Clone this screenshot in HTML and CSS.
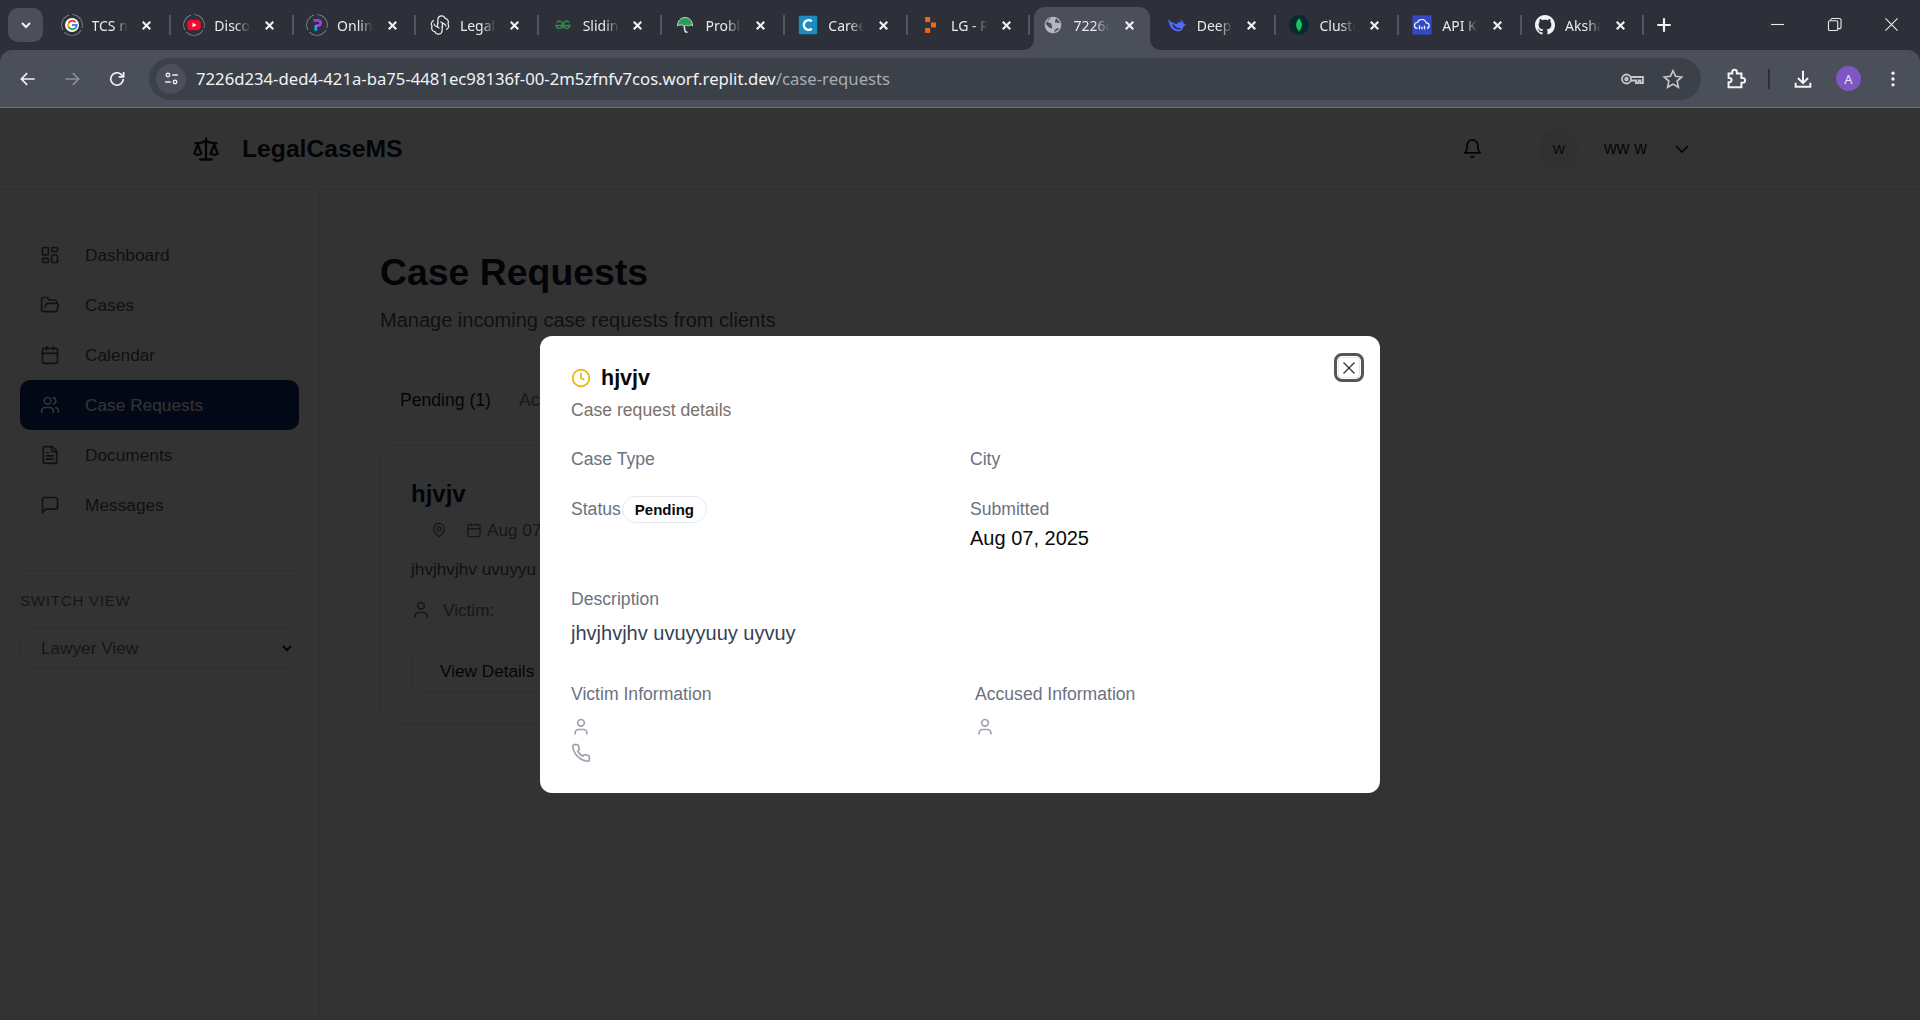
FILE: index.html
```html
<!DOCTYPE html>
<html lang="en">
<head>
<meta charset="UTF-8" />
<meta name="viewport" content="width=device-width, initial-scale=1" />
<title>LegalCaseMS - Case Requests</title>
<link rel="stylesheet" href="styles.css">
</head>
<body>
  <svg class="sprite" width="0" height="0">
    <symbol id="i-x" viewBox="0 0 24 24"><path d="M18 6 6 18"/><path d="m6 6 12 12"/></symbol>
    <symbol id="i-user" viewBox="0 0 24 24"><path d="M19 21v-2a4 4 0 0 0-4-4H9a4 4 0 0 0-4 4v2"/><circle cx="12" cy="7" r="4"/></symbol>
    <symbol id="i-calendar" viewBox="0 0 24 24"><path d="M8 2v4"/><path d="M16 2v4"/><rect width="18" height="18" x="3" y="4" rx="2"/><path d="M3 10h18"/></symbol>
    <symbol id="i-chevron" viewBox="0 0 24 24"><path d="m6 9 6 6 6-6"/></symbol>
  </svg>

  <!-- browser tab strip -->
  <div class="tabstrip">
    <button class="tabsearch"><svg class="icon"><use href="#i-chevron"/></svg></button>
    <div class="tabs">
      <div class="tab">
        <span class="favicon ring"><svg viewBox="0 0 24 24"><circle cx="12" cy="12" r="12" fill="#fff"/><path d="M18.300 7.200a7.800 7.800 0 0 0-12.200 1.300" fill="none" stroke="#ea4335" stroke-width="3.400"/><path d="M6.100 8.500a7.800 7.800 0 0 0 0 7" fill="none" stroke="#fbbc05" stroke-width="3.400"/><path d="M6.100 15.500a7.800 7.800 0 0 0 12 1.800" fill="none" stroke="#34a853" stroke-width="3.400"/><path d="M18.100 17.300a7.800 7.800 0 0 0 1.900-5.300h-8" fill="none" stroke="#4285f4" stroke-width="3.400"/></svg></span>
        <span class="tab-title">TCS ninja</span><svg class="tab-close"><use href="#i-x"/></svg>
      </div>
      <div class="tab">
        <span class="favicon ring"><svg viewBox="0 0 24 24"><rect x="0.500" y="3" width="23" height="18" rx="6" fill="#f50b32"/><path d="M9.500 8v8l7-4z" fill="#fff"/></svg></span>
        <span class="tab-title">Discover</span><svg class="tab-close"><use href="#i-x"/></svg>
      </div>
      <div class="tab">
        <span class="favicon ring"><svg viewBox="0 0 24 24"><path d="M6 4h7c7 0 7 9 0 9H10.500" fill="none" stroke="#a23ce8" stroke-width="4.500"/><path d="M10 12v10" stroke="#1fa5e8" stroke-width="4.500"/></svg></span>
        <span class="tab-title">Online</span><svg class="tab-close"><use href="#i-x"/></svg>
      </div>
      <div class="tab">
        <span class="favicon"><svg viewBox="0 0 24 24" fill="none" stroke="#e8eaed" stroke-width="1.500"><path d="M9.500 11V5.500a4.500 4.500 0 0 1 8.700-1.500 4.500 4.500 0 0 1 3.300 6.500 4.500 4.500 0 0 1-2.300 7M12.500 8l4.800 2.800a4.500 4.500 0 0 1 2 3M15 10l-.2 5.500M14.500 13v5.500a4.500 4.500 0 0 1-8.700 1.500 4.500 4.500 0 0 1-3.300-6.500 4.500 4.500 0 0 1 2.300-7M11.500 16l-4.800-2.800a4.500 4.500 0 0 1-2-3M9 14l.2-5.500"/></svg></span>
        <span class="tab-title">Legal</span><svg class="tab-close"><use href="#i-x"/></svg>
      </div>
      <div class="tab">
        <span class="favicon"><svg viewBox="0 0 24 24" fill="none" stroke="#2f8d46" stroke-width="1.700"><path d="M12 12.500H3.500a4.200 4.200 0 1 0 1-3.500"/><path d="M12 12.500h8.500a4.200 4.200 0 1 1-1-3.500"/></svg></span>
        <span class="tab-title">Sliding</span><svg class="tab-close"><use href="#i-x"/></svg>
      </div>
      <div class="tab">
        <span class="favicon"><svg viewBox="0 0 24 24"><path d="M3 13C3 7 7 3 12 3s9 4 9 10c-2-1.500-3.500-1.500-5 .5-1.500-1.500-3-1.500-4.500 0C10 12 6 11 3 13z" fill="#2e9b57" stroke="#d9efe0"/><path d="M11 13l1 6c.2 1.500 2 2 3 1" fill="none" stroke="#d9efe0" stroke-width="1.800"/></svg></span>
        <span class="tab-title">Problems</span><svg class="tab-close"><use href="#i-x"/></svg>
      </div>
      <div class="tab">
        <span class="favicon"><svg viewBox="0 0 24 24"><rect x="1" y="1" width="22" height="22" rx="1.500" fill="#1c8bc0"/><path d="M16.500 7.500a5.800 5.800 0 1 0 0 9" fill="none" stroke="#fff" stroke-width="3"/></svg></span>
        <span class="tab-title">Careers</span><svg class="tab-close"><use href="#i-x"/></svg>
      </div>
      <div class="tab">
        <span class="favicon"><svg viewBox="0 0 24 24" fill="#f0661a"><rect x="5" y="2.500" width="6" height="6"/><rect x="12" y="9" width="6" height="6"/><rect x="5" y="15.500" width="6" height="6"/></svg></span>
        <span class="tab-title">LG - Research</span><svg class="tab-close"><use href="#i-x"/></svg>
      </div>
      <div class="tab active">
        <span class="favicon"><svg viewBox="0 0 24 24"><circle cx="12" cy="12" r="10" fill="#b4b7bd"/><path d="M11 2.500C9 3.500 6 5 5.500 7S8 9.500 9.500 10c1 1 .5 2.500 1.500 3l-.5 3.500C8.500 16 4.500 13.500 3 10M16 4c-1 1.500-2 3-1.500 5 1.500.5 4 .5 6.500.5M13 21c.5-2 2-4 3.500-5l3.500.5" fill="#4a4f5a"/></svg></span>
        <span class="tab-title">7226d234-ded4</span><svg class="tab-close"><use href="#i-x"/></svg>
      </div>
      <div class="tab">
        <span class="favicon"><svg viewBox="0 0 24 24"><path d="M1.500 5c.5 6 3.500 13 10 14.500 4.500 1 7.500-2 8.500-6 1 0 2.500-1 3-3-1 .8-2 .8-2.800.4-.2-2.200-1.500-4.400-4.200-5.400 1 1 1.500 2.500 1.200 3.800L14.500 8c-1.500.5-2 1.500-2.500 3C8.500 10 4.500 8.500 1.500 5z" fill="#4d6bfe"/><path d="M6 10.500c1 3.500 3 6 6.500 6.800 2 .4 3.500-.4 4.500-1.800-3 .5-5.500 0-7-2-.8-1-2.500-2.200-4-3z" fill="#2d3039"/></svg></span>
        <span class="tab-title">DeepSeek</span><svg class="tab-close"><use href="#i-x"/></svg>
      </div>
      <div class="tab">
        <span class="favicon"><svg viewBox="0 0 24 24"><circle cx="12" cy="12" r="12" fill="#0b2a2f"/><path d="M12 4c2.500 3 3.500 5.500 3.500 8s-1.500 5-3.500 8c-2-3-3.500-5.500-3.500-8s1-5 3.500-8z" fill="#13c85c"/></svg></span>
        <span class="tab-title">Cluster0</span><svg class="tab-close"><use href="#i-x"/></svg>
      </div>
      <div class="tab">
        <span class="favicon"><svg viewBox="0 0 24 24"><rect x="0.500" y="0.500" width="23" height="23" fill="#3448c5"/><path d="M6.500 16a3.500 3.500 0 0 1 0-7 5.500 5.500 0 0 1 10.500.5 3.300 3.300 0 0 1 1 6.500" fill="none" stroke="#fff" stroke-width="1.400"/><path d="M9 12.500V17M12 14v3M15 13v4" stroke="#fff" stroke-width="1.600"/></svg></span>
        <span class="tab-title">API Keys</span><svg class="tab-close"><use href="#i-x"/></svg>
      </div>
      <div class="tab">
        <span class="favicon"><svg viewBox="0 0 16 16"><path fill="#f1f3f4" d="M8 0C3.580 0 0 3.580 0 8c0 3.540 2.290 6.530 5.470 7.590.4.070.55-.17.55-.38 0-.19-.01-.82-.01-1.490-2.010.37-2.530-.49-2.690-.94-.09-.23-.48-.94-.82-1.130-.28-.15-.68-.52-.01-.53.630-.01 1.080.58 1.230.82.720 1.210 1.870.87 2.330.66.070-.52.280-.87.510-1.070-1.780-.2-3.640-.89-3.640-3.950 0-.87.310-1.590.820-2.150-.08-.2-.36-1.020.08-2.120 0 0 .67-.21 2.200.82.640-.18 1.320-.27 2-.27s1.360.09 2 .27c1.530-1.040 2.200-.82 2.200-.82.440 1.100.160 1.920.080 2.120.51.560.82 1.270.82 2.150 0 3.070-1.870 3.750-3.650 3.950.29.250.54.730.54 1.480 0 1.070-.01 1.930-.01 2.200 0 .21.150.46.550.38A8.010 8.010 0 0 0 16 8c0-4.420-3.580-8-8-8z"/></svg></span>
        <span class="tab-title">Akshat</span><svg class="tab-close"><use href="#i-x"/></svg>
      </div>
      <button class="newtab"><svg viewBox="0 0 24 24"><path d="M12 4v16M4 12h16"/></svg></button>
    </div>
    <div class="winctrl">
      <svg viewBox="0 0 14 14"><path d="M0 7h14"/></svg>
      <svg viewBox="0 0 14 14"><rect x="0.500" y="3" width="10" height="10.500" rx="1.500"/><path d="M3 3V2a1.500 1.500 0 0 1 1.500-1.500h8A1.500 1.500 0 0 1 14 2v8a1.500 1.500 0 0 1-1.500 1.500h-2"/></svg>
      <svg viewBox="0 0 14 14"><path d="M0.500 0.500l13 13M13.500 0.500l-13 13"/></svg>
    </div>
  </div>

  <!-- browser toolbar -->
  <div class="toolbar">
    <svg class="tool" viewBox="0 0 24 24"><path d="M20 12H5M11 5l-7 7 7 7"/></svg>
    <svg class="tool off" viewBox="0 0 24 24"><path d="M4 12h15M13 5l7 7-7 7"/></svg>
    <svg class="tool" viewBox="0 0 24 24"><path d="M19.500 12a7.500 7.500 0 1 1-2.200-5.300L19.500 9"/><path d="M20 3.500V9.500h-6" /></svg>
    <div class="omnibox">
      <span class="site-btn"><svg viewBox="0 0 24 24"><circle cx="7" cy="7" r="2.500"/><path d="M13 7h8M3 17h8"/><circle cx="17" cy="17" r="2.500"/></svg></span>
      <span class="url">7226d234-ded4-421a-ba75-4481ec98136f-00-2m5zfnfv7cos.worf.replit.dev<span class="url-path">/case-requests</span></span>
      <svg class="omni-icon key" viewBox="0 0 24 24"><circle cx="6.500" cy="12" r="4.500"/><circle cx="6.500" cy="12" r="1.300"/><path d="M11 10h12v6h-2.500v-2.500h-2V16H16v-2.500h-5"/></svg>
      <svg class="omni-icon" viewBox="0 0 24 24"><path d="M12 3l2.800 6 6.700.8-5 4.500 1.400 6.700L12 17.600 6.100 21l1.400-6.700-5-4.500 6.700-.8z"/></svg>
    </div>
    <svg class="tool puzzle" viewBox="0 0 24 24"><path d="M9 4.500a2.500 2.500 0 0 1 5 0V6h5v5h1.500a2.500 2.500 0 0 1 0 5H19v5H5v-5.500h1a2.300 2.300 0 0 0 0-4.600H5V6h4z"/></svg>
    <span class="tool-sep"></span>
    <svg class="tool dl" viewBox="0 0 24 24"><path d="M12 3v13M6.500 11l5.500 5.500 5.500-5.500M4 16v4.500h16V16"/></svg>
    <span class="profile">A</span>
    <svg class="tool dots" viewBox="0 0 24 24"><circle cx="12" cy="5" r="2"/><circle cx="12" cy="12" r="2"/><circle cx="12" cy="19" r="2"/></svg>
  </div>

  <!-- the app itself -->
  <div class="page">
    <header class="appbar">
      <div class="appbar-inner">
        <div class="brand">
          <svg class="brand-icon" viewBox="0 0 24 24"><path d="m16 16 3-8 3 8c-.87.65-1.920 1-3 1s-2.130-.35-3-1Z"/><path d="m2 16 3-8 3 8c-.87.65-1.920 1-3 1s-2.130-.35-3-1Z"/><path d="M7 21h10"/><path d="M12 3v18"/><path d="M3 7h2c2 0 5-1 7-2 2 1 5 2 7 2h2"/></svg>
          <span class="brand-name">LegalCaseMS</span>
        </div>
        <div class="account">
          <svg class="bell" viewBox="0 0 24 24"><path d="M6 8a6 6 0 0 1 12 0c0 7 3 9 3 9H3s3-2 3-9"/><path d="M10.300 21a1.940 1.940 0 0 0 3.400 0"/></svg>
          <span class="avatar">w</span>
          <span class="account-name">ww w</span>
          <svg class="account-chev"><use href="#i-chevron"/></svg>
        </div>
      </div>
    </header>

    <div class="layout">
      <aside class="sidebar">
        <nav class="nav">
          <a class="nav-item"><svg viewBox="0 0 24 24"><rect width="7" height="9" x="3" y="3" rx="1"/><rect width="7" height="5" x="14" y="3" rx="1"/><rect width="7" height="9" x="14" y="12" rx="1"/><rect width="7" height="5" x="3" y="16" rx="1"/></svg>Dashboard</a>
          <a class="nav-item"><svg viewBox="0 0 24 24"><path d="m6 14 1.500-2.900A2 2 0 0 1 9.240 10H20a2 2 0 0 1 1.940 2.500l-1.540 6a2 2 0 0 1-1.950 1.500H4a2 2 0 0 1-2-2V5a2 2 0 0 1 2-2h3.900a2 2 0 0 1 1.690.9l.81 1.200a2 2 0 0 0 1.670.9H18a2 2 0 0 1 2 2v2"/></svg>Cases</a>
          <a class="nav-item"><svg><use href="#i-calendar"/></svg>Calendar</a>
          <a class="nav-item active"><svg viewBox="0 0 24 24"><path d="M16 21v-2a4 4 0 0 0-4-4H6a4 4 0 0 0-4 4v2"/><circle cx="9" cy="7" r="4"/><path d="M22 21v-2a4 4 0 0 0-3-3.870"/><path d="M16 3.130a4 4 0 0 1 0 7.750"/></svg>Case Requests</a>
          <a class="nav-item"><svg viewBox="0 0 24 24"><path d="M15 2H6a2 2 0 0 0-2 2v16a2 2 0 0 0 2 2h12a2 2 0 0 0 2-2V7Z"/><path d="M14 2v4a2 2 0 0 0 2 2h4"/><path d="M10 9H8"/><path d="M16 13H8"/><path d="M16 17H8"/></svg>Documents</a>
          <a class="nav-item"><svg viewBox="0 0 24 24"><path d="M21 15a2 2 0 0 1-2 2H7l-4 4V5a2 2 0 0 1 2-2h14a2 2 0 0 1 2 2z"/></svg>Messages</a>
        </nav>
        <div class="switch">
          <div class="switch-label">SWITCH VIEW</div>
          <div class="switch-field">
            <select class="switch-select"><option>Lawyer View</option></select>
            <svg class="switch-chev"><use href="#i-chevron"/></svg>
          </div>
        </div>
      </aside>

      <main class="main">
        <h1>Case Requests</h1>
        <p class="lead">Manage incoming case requests from clients</p>
        <div class="req-tabs">
          <span class="req-tab current">Pending (1)</span>
          <span class="req-tab">Accepted</span>
        </div>
        <div class="req-card">
          <h3>hjvjv</h3>
          <div class="req-meta">
            <svg viewBox="0 0 24 24"><path d="M20 10c0 6-8 12-8 12s-8-6-8-12a8 8 0 0 1 16 0Z"/><circle cx="12" cy="10" r="3"/></svg>
            <svg class="req-cal"><use href="#i-calendar"/></svg>
            <span>Aug 07</span>
          </div>
          <p class="req-desc">jhvjhvjhv uvuyyu</p>
          <div class="req-victim"><svg><use href="#i-user"/></svg>Victim:</div>
          <button class="req-btn">View Details</button>
        </div>
      </main>
    </div>

    <div class="overlay">
      <div class="modal">
        <button class="modal-close"><svg><use href="#i-x"/></svg></button>
        <div class="modal-title">
          <svg viewBox="0 0 24 24"><circle cx="12" cy="12" r="10"/><polyline points="12 6 12 12 16 14"/></svg>
          <span>hjvjv</span>
        </div>
        <p class="modal-sub">Case request details</p>

        <div class="detail-grid">
          <div class="detail"><span class="lbl">Case Type</span></div>
          <div class="detail"><span class="lbl">City</span></div>
          <div class="detail status"><span class="lbl">Status</span><span class="badge">Pending</span></div>
          <div class="detail"><span class="lbl">Submitted</span><div class="val">Aug 07, 2025</div></div>
        </div>

        <div class="description">
          <span class="lbl">Description</span>
          <p>jhvjhvjhv uvuyyuuy uyvuy</p>
        </div>

        <div class="people">
          <div class="person">
            <span class="lbl">Victim Information</span>
            <svg><use href="#i-user"/></svg>
            <svg viewBox="0 0 24 24"><path d="M22 16.920v3a2 2 0 0 1-2.180 2 19.790 19.790 0 0 1-8.630-3.070 19.500 19.500 0 0 1-6-6 19.790 19.790 0 0 1-3.070-8.670A2 2 0 0 1 4.110 2h3a2 2 0 0 1 2 1.720 12.840 12.840 0 0 0 .7 2.810 2 2 0 0 1-.45 2.110L8.090 9.910a16 16 0 0 0 6 6l1.270-1.270a2 2 0 0 1 2.110-.45 12.840 12.840 0 0 0 2.810.7A2 2 0 0 1 22 16.92z"/></svg>
          </div>
          <div class="person">
            <span class="lbl">Accused Information</span>
            <svg><use href="#i-user"/></svg>
          </div>
        </div>
      </div>
    </div>
  </div>
</body>
</html>
```

FILE: styles.css
```css
* {
  box-sizing: border-box;
}
html, body {
  height: 100%;
}
body {
  margin: 0;
  overflow: hidden;
  background: #2d3039;
  font-family: "Liberation Sans", Arial, sans-serif;
  display: flex;
  flex-direction: column;
}
.sprite {
  position: absolute;
}
button {
  border: 0;
  background: none;
  padding: 0;
  font: inherit;
}
svg {
  display: block;
  flex: none;
}

/* browser chrome */
.tabstrip {
  height: 50px;
  flex: none;
  background: #2d3039;
  display: flex;
  align-items: stretch;
  font-family: "Noto Sans", sans-serif;
}
.tabsearch {
  width: 35px;
  height: 34px;
  margin: 8px 0 0 8px;
  border-radius: 10px;
  background: #4a4f5a;
  display: flex;
  align-items: center;
  justify-content: center;
}
.tabsearch .icon {
  width: 16px;
  height: 16px;
  fill: none;
  stroke: #f1f3f4;
  stroke-width: 3;
}
.tabs {
  display: flex;
  margin-left: 5px;
  flex: 1;
}
.tab {
  width: 122.8px;
  display: flex;
  align-items: center;
  position: relative;
  padding-left: 13.5px;
  color: #e8eaed;
  font-size: 14px;
}
.tab::after {
  content: "";
  position: absolute;
  right: 0;
  top: 15px;
  height: 20px;
  width: 2px;
  background: #52565f;
}
.tab.active {
  background: #4a4f5a;
  margin: 7px 2.8px 0 4px;
  width: 116px;
  padding: 0 0 7px 9px;
  border-radius: 11px 11px 0 0;
}
/* the little flares where the active tab meets the toolbar */
.tab.active::before,
.tab.active::after {
  content: "";
  display: block;
  position: absolute;
  top: auto;
  bottom: 0;
  width: 10px;
  height: 10px;
  background: radial-gradient(circle at 0 0, #2d3039 9.5px, #4a4f5a 10px);
}
.tab.active::before {
  left: -10px;
}
.tab.active::after {
  right: -10px;
  background: radial-gradient(circle at 100% 0, #2d3039 9.5px, #4a4f5a 10px);
}
.favicon {
  width: 20px;
  height: 20px;
  flex: none;
  position: relative;
}
.favicon svg {
  width: 20px;
  height: 20px;
}
.favicon.ring svg {
  width: 14px;
  height: 14px;
  margin: 3px;
}
.favicon.ring::before {
  content: "";
  position: absolute;
  inset: -1px;
  border-radius: 50%;
  background: conic-gradient(#70747c 0 105deg, transparent 0 120deg, #70747c 0 225deg, transparent 0 240deg, #70747c 0 345deg, transparent 0);
  -webkit-mask-image: radial-gradient(circle, transparent 9.5px, #000 10px);
  mask-image: radial-gradient(circle, transparent 9.5px, #000 10px);
}
.tab-title {
  margin-left: 10px;
  width: 36px;
  white-space: nowrap;
  overflow: hidden;
  -webkit-mask-image: linear-gradient(to right, #000 60%, transparent);
  mask-image: linear-gradient(to right, #000 60%, transparent);
}
.tab-close {
  width: 15px;
  height: 15px;
  margin-left: 11.5px;
  fill: none;
  stroke: #f1f3f4;
  stroke-width: 3.4;
}
.tab.active .tab-close {
  margin-left: 13px;
}
.newtab {
  width: 20px;
  height: 20px;
  margin: 15px 0 0 10px;
}
.newtab svg {
  fill: none;
  stroke: #f1f3f4;
  stroke-width: 2.6;
  width: 20px;
  height: 20px;
}
.winctrl {
  padding: 0 22px 2px 0;
  display: flex;
  align-items: center;
  gap: 44px;
}
.winctrl svg {
  width: 13px;
  height: 13px;
  fill: none;
  stroke: #e8eaed;
  stroke-width: 1.2;
  overflow: visible;
}

.toolbar {
  height: 58px;
  flex: none;
  background: #4a4f5a;
  border-bottom: 1px solid #6d7078;
  border-radius: 12px 12px 0 0;
  display: flex;
  align-items: center;
  padding: 0 16px 0 18px;
}
.tool {
  width: 20px;
  height: 20px;
  fill: none;
  stroke: #f1f3f4;
  stroke-width: 2;
  margin-right: 24px;
}
.tool.off {
  stroke: #8a8e96;
  margin-right: 25px;
}
.tool.off + .tool {
  margin-right: 23px;
}
.omnibox {
  width: 1552px;
  height: 42px;
  border-radius: 21px;
  background: #3c4049;
  display: flex;
  align-items: center;
  padding: 0 17px 0 7px;
  margin-right: 23px;
  margin-left: -1px;
}
.site-btn {
  width: 30px;
  height: 30px;
  border-radius: 50%;
  background: #4a4f5a;
  display: flex;
  align-items: center;
  justify-content: center;
}
.site-btn svg {
  width: 17px;
  height: 17px;
  fill: none;
  stroke: #e8eaed;
  stroke-width: 2;
}
.url {
  margin-left: 10px;
  font-family: "Noto Sans", sans-serif;
  font-size: 16.7px;
  color: #f1f3f4;
  flex: 1;
  white-space: nowrap;
}
.url-path {
  color: #a9acb2;
}
.omni-icon {
  width: 22px;
  height: 22px;
  fill: none;
  stroke: #c4c7cc;
  stroke-width: 1.8;
  margin-left: 18px;
}
.omni-icon.key {
  width: 24px;
  height: 24px;
}
.tool.puzzle {
  width: 22px;
  height: 22px;
  margin-right: 22px;
  stroke-width: 2.2;
}
.tool-sep {
  width: 2px;
  height: 20px;
  background: #2d3039;
  margin-right: 22px;
}
.tool.dl {
  width: 22px;
  height: 22px;
  margin-right: 22px;
  stroke-width: 2.200;
}
.profile {
  width: 25px;
  height: 25px;
  border-radius: 50%;
  background: #7e57c2;
  color: #e8e0f5;
  font-size: 13px;
  display: flex;
  align-items: center;
  justify-content: center;
  margin-right: 22px;
  font-family: "Noto Sans", sans-serif;
}
.tool.dots {
  fill: #f1f3f4;
  stroke: none;
  margin: 0;
}

/* page under the dialog */
.page {
  flex: 1;
  position: relative;
  display: flex;
  flex-direction: column;
  min-height: 0;
  background: #fff;
}
.appbar {
  height: 82px;
  flex: none;
  border-bottom: 1px solid #e5e7eb;
}
.appbar-inner {
  max-width: 1536px;
  margin: 0 auto;
  height: 100%;
  display: flex;
  align-items: center;
  justify-content: space-between;
  padding-right: 34px;
}
.brand {
  display: flex;
  align-items: center;
  gap: 22px;
}
.brand-icon {
  width: 28px;
  height: 28px;
  fill: none;
  stroke: #111827;
  stroke-width: 2;
  stroke-linecap: round;
  stroke-linejoin: round;
}
.brand-name {
  font-size: 24.7px;
  font-weight: 700;
  color: #111827;
}
.account {
  display: flex;
  align-items: center;
}
.bell {
  width: 21px;
  height: 21px;
  fill: none;
  stroke: #111827;
  stroke-width: 2;
  stroke-linecap: round;
  stroke-linejoin: round;
  margin-right: 56px;
}
.avatar {
  width: 40px;
  height: 40px;
  border-radius: 50%;
  background: #f3f4f6;
  color: #374151;
  font-size: 17px;
  display: flex;
  align-items: center;
  justify-content: center;
  margin-right: 25px;
}
.account-name {
  font-size: 17.6px;
  color: #1f2937;
  margin-right: 23px;
}
.account-chev {
  width: 24px;
  height: 24px;
  fill: none;
  stroke: #111827;
  stroke-width: 1.7;
}
.layout {
  flex: 1;
  display: flex;
  min-height: 0;
}
.sidebar {
  width: 320px;
  flex: none;
  border-right: 1px solid #e5e7eb;
  padding: 40px 20px 0;
}
.nav-item {
  height: 50px;
  display: flex;
  align-items: center;
  gap: 25px;
  padding-left: 20px;
  border-radius: 10px;
  font-size: 17.3px;
  color: #4b5563;
}
.nav-item svg {
  width: 20px;
  height: 20px;
  fill: none;
  stroke: #4b5563;
  stroke-width: 2;
  stroke-linecap: round;
  stroke-linejoin: round;
}
.nav-item.active {
  background: #0d2a70;
  color: #fff;
}
.nav-item.active svg {
  stroke: #fff;
}
.switch {
  margin-top: 40px;
  padding-top: 21px;
  border-top: 1px solid #e5e7eb;
}
.switch-label {
  font-size: 15.2px;
  line-height: 18px;
  letter-spacing: 0.7px;
  color: #6b7280;
}
.switch-field {
  position: relative;
  margin-top: 17px;
}
.switch-select {
  display: block;
  width: 100%;
  height: 42px;
  padding-left: 20px;
  border: 1px solid #e5e7eb;
  border-radius: 10px;
  background: #fff;
  font-family: inherit;
  font-size: 17.2px;
  color: #6b7280;
  appearance: none;
}
.switch-chev {
  position: absolute;
  right: 4px;
  top: 13px;
  width: 16px;
  height: 16px;
  fill: none;
  stroke: #111827;
  stroke-width: 3;
}
.main {
  flex: 1;
  padding: 60px 0 0 60px;
}
.main h1 {
  margin: 0;
  font-size: 37.4px;
  line-height: 44px;
  color: #111827;
}
.lead {
  margin: 12px 0 0;
  font-size: 20px;
  line-height: 28px;
  color: #4b5563;
}
.req-tabs {
  margin: 46px 0 0 4px;
  height: 50px;
  display: flex;
  align-items: flex-start;
}
.req-tab {
  height: 40px;
  display: flex;
  align-items: center;
  padding: 0 15px 0 12px;
  font-size: 17.6px;
  color: #6b7280;
  white-space: nowrap;
}
.req-tab.current {
  background: #fff;
  border: 1px solid #f3f4f6;
  border-radius: 8px;
  color: #111827;
  padding: 0 15px;
}
.req-card {
  width: 500px;
  height: 279px;
  margin-top: 15px;
  border: 1px solid #e5e7eb;
  border-radius: 14px;
  padding: 30px;
}
.req-card h3 {
  margin: 0;
  padding-top: 1px;
  font-size: 24px;
  line-height: 34px;
  color: #111827;
}
.req-meta {
  display: flex;
  align-items: center;
  margin-top: 7px;
  height: 24px;
  padding-left: 20px;
  font-size: 17.2px;
  color: #6b7280;
}
.req-meta svg {
  width: 16px;
  height: 16px;
  fill: none;
  stroke: #6b7280;
  stroke-width: 2;
}
.req-cal {
  margin: 0 5px 0 19px;
}
.req-desc {
  margin: 15px 0 0;
  font-size: 17.2px;
  line-height: 24px;
  color: #4b5563;
}
.req-victim {
  display: flex;
  align-items: center;
  gap: 12px;
  margin-top: 17px;
  font-size: 17.2px;
  color: #6b7280;
  line-height: 24px;
}
.req-victim svg {
  width: 20px;
  height: 20px;
  fill: none;
  stroke: #6b7280;
  stroke-width: 2;
}
.req-btn {
  width: 200px;
  height: 44px;
  margin-top: 27px;
  padding-left: 28px;
  border: 1px solid #e5e7eb;
  border-radius: 10px;
  text-align: left;
  font-size: 17.2px;
  color: #111827;
}

/* dialog on top of the dimmed page */
.overlay {
  position: absolute;
  inset: 0;
  background: rgba(0, 0, 0, 0.8);
  display: flex;
  align-items: center;
  justify-content: center;
}
.modal {
  width: 840px;
  height: 457px;
  margin-top: 1px;
  position: relative;
  background: #fff;
  border-radius: 12px;
  padding: 28px 31px 0;
}
.modal-close {
  position: absolute;
  top: 17px;
  right: 16px;
  width: 30px;
  height: 29px;
  border: 3px solid #555;
  border-radius: 8px;
  box-shadow: inset 0 0 0 1px #fff, inset 0 0 0 2px #e5e7eb;
  display: flex;
  align-items: center;
  justify-content: center;
}
.modal-close svg {
  width: 22px;
  height: 22px;
  fill: none;
  stroke: #333;
  stroke-width: 1.3;
}
.modal-title {
  display: flex;
  align-items: center;
  gap: 10px;
  font-size: 21.5px;
  font-weight: 700;
  line-height: 28px;
  color: #0a0a0a;
}
.modal-title svg {
  width: 20px;
  height: 20px;
  fill: none;
  stroke: #eab308;
  stroke-width: 2;
}
.modal-sub {
  margin: 6px 0 0;
  font-size: 17.6px;
  line-height: 24px;
  color: #78716c;
}
.lbl {
  font-size: 17.6px;
  line-height: 24px;
  color: #6b7280;
}
.detail-grid {
  display: grid;
  grid-template-columns: 399px 1fr;
  grid-template-rows: 50px 90px;
  margin-top: 25px;
}
.status {
  display: flex;
  align-items: flex-start;
}
.val {
  margin-top: 3px;
  font-size: 20px;
  line-height: 28px;
  color: #0a0a0a;
}
.badge {
  margin: -1px 0 0 1px;
  width: 85px;
  height: 27px;
  border: 1px solid #e5e7eb;
  border-radius: 14px;
  display: flex;
  align-items: center;
  justify-content: center;
  font-size: 15px;
  font-weight: 700;
  color: #0a0a0a;
}
.description p {
  margin: 8px 0 0;
  font-size: 20px;
  line-height: 28px;
  color: #374151;
}
.people {
  display: grid;
  grid-template-columns: 404px 1fr;
  margin-top: 35px;
}
.person svg {
  width: 20px;
  height: 20px;
  margin-top: 11px;
  fill: none;
  stroke: #9ca3af;
  stroke-width: 2;
}
.person svg + svg {
  margin-top: 6px;
}
```
